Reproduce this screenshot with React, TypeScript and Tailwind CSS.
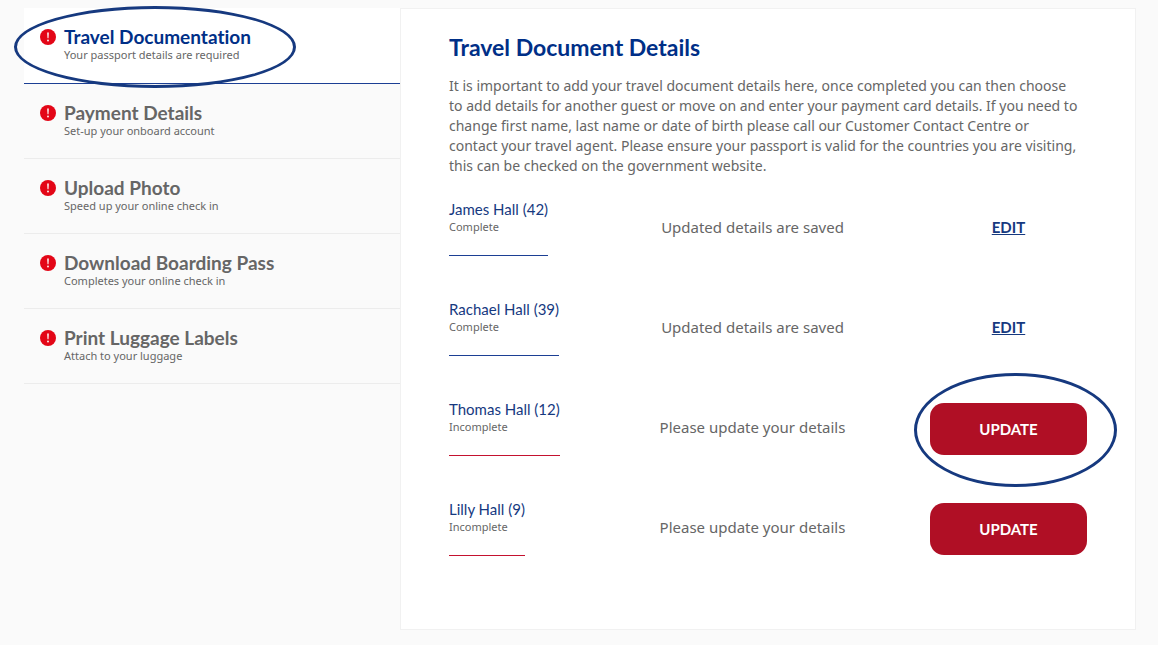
import React from 'react';

const steps = [
  { title: 'Travel Documentation', note: 'Your passport details are required', active: true },
  { title: 'Payment Details', note: 'Set-up your onboard account', active: false },
  { title: 'Upload Photo', note: 'Speed up your online check in', active: false },
  { title: 'Download Boarding Pass', note: 'Completes your online check in', active: false },
  { title: 'Print Luggage Labels', note: 'Attach to your luggage', active: false },
];

const guests = [
  { name: 'James Hall (42)', complete: true, highlight: false },
  { name: 'Rachael Hall (39)', complete: true, highlight: false },
  { name: 'Thomas Hall (12)', complete: false, highlight: true },
  { name: 'Lilly Hall (9)', complete: false, highlight: false },
];

function AlertIcon() {
  return (
    <svg className="size-4 shrink-0" viewBox="0 0 16 16" aria-hidden="true">
      <circle cx="8" cy="8" r="8" fill="#e30617" />
      <path d="M7.2 3.6h1.6l-.3 5.6h-1z" fill="#fff" />
      <circle cx="8" cy="11.5" r="0.9" fill="#fff" />
    </svg>
  );
}

export default function App() {
  return (
    <div className="flex min-h-screen items-start bg-[#fafafa] pt-2 pr-[22px] pb-3 pl-6 font-['Noto_Sans',sans-serif] text-[#666] [font-variant-ligatures:none]">
      {/* Steps */}
      <nav className="w-[376px] shrink-0">
        {steps.map((step) => (
          <div key={step.title} className="relative">
            <a
              href="#"
              className={`flex gap-2 border-b px-4 pt-[19px] ${step.active ? 'h-[76px] border-[#1c3f94] bg-white' : 'h-[75px] border-[#ececec]'}`}
            >
              <span className="pt-0.5">
                <AlertIcon />
              </span>
              <span>
                <span
                  className={`block font-['Lato',sans-serif] text-[19px] leading-5 font-bold ${step.active ? 'text-[#002f87]' : 'text-[#666]'}`}
                >
                  {step.title}
                </span>
                <span className="block text-[11px] leading-4">{step.note}</span>
              </span>
            </a>
            {step.active && (
              <div className="pointer-events-none absolute -top-0.5 -left-2.5 h-[82px] w-[282px] rounded-[50%] border-3 border-[#16397f]" />
            )}
          </div>
        ))}
      </nav>

      {/* Details */}
      <main className="min-h-[622px] flex-1 border border-[#f1f1f1] bg-white px-12 pt-[26px]">
        <h1 className="font-['Lato',sans-serif] text-[23px] leading-6 font-bold text-[#002f87]">
          Travel Document Details
        </h1>
        <p className="mt-[17px] pr-1.5 text-sm leading-5">
          It is important to add your travel document details here, once completed you can then choose to add
          details for another guest or move on and enter your payment card details. If you need to change first
          name, last name or date of birth please call our Customer Contact Centre or contact your travel agent.
          Please ensure your passport is valid for the countries you are visiting, this can be checked on the
          government website.
        </p>

        <ul className="mt-6">
          {guests.map((guest) => (
            <li key={guest.name} className="grid h-25 grid-cols-[126px_1fr_157px] items-start">
              <div className="w-max">
                <div className="font-['Lato',sans-serif] text-[15px] leading-[19px] text-[#16397f]">{guest.name}</div>
                <div className="text-[11px] leading-4">{guest.complete ? 'Complete' : 'Incomplete'}</div>
                <div className={`mt-5 h-px ${guest.complete ? 'bg-[#1c3f94]' : 'bg-[#c4122f]'}`} />
              </div>
              <div className="pt-[15px] text-center text-[15px] leading-6">
                {guest.complete ? 'Updated details are saved' : 'Please update your details'}
              </div>
              {guest.complete ? (
                <a
                  href="#"
                  className="pt-[15px] text-center font-['Lato',sans-serif] text-[15px] leading-6 font-bold text-[#16397f] underline"
                >
                  EDIT
                </a>
              ) : (
                <div className="relative pt-[3px]">
                  <button className="h-[52px] w-full rounded-[14px] bg-[#b00f25] font-['Lato',sans-serif] text-[15px] font-bold text-white">
                    UPDATE
                  </button>
                  {guest.highlight && (
                    <div className="pointer-events-none absolute -top-[27px] -left-4 h-[114px] w-[203px] rounded-[50%] border-3 border-[#16397f]" />
                  )}
                </div>
              )}
            </li>
          ))}
        </ul>
      </main>
    </div>
  );
}
